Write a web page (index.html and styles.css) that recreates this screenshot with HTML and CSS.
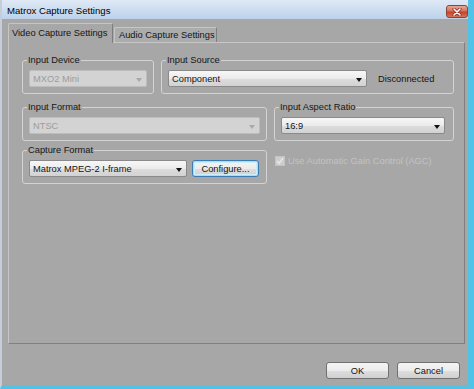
FILE: index.html
```html
<!DOCTYPE html>
<html lang="en">
<head>
    <meta charset="UTF-8">
    <title>Matrox Capture Settings</title>
    <link rel="stylesheet" href="styles.css">
</head>
<body>
    <div class="window">
        <div class="titlebar">
            <span class="title">Matrox Capture Settings</span>
            <span class="close-btn">
                <svg width="10" height="8" viewBox="0 0 10 8">
                    <path d="M2 1 L8 7 M8 1 L2 7" stroke="#7a2a1e" stroke-width="3" stroke-linecap="round"/>
                    <path d="M2 1 L8 7 M8 1 L2 7" stroke="#ffffff" stroke-width="1.6" stroke-linecap="round"/>
                </svg>
            </span>
        </div>

        <div class="client">
            <div class="tabs">
                <div class="tab active">Video Capture Settings</div>
                <div class="tab">Audio Capture Settings</div>
            </div>

            <div class="tab-page">
                <!-- Linha 1: dispositivo e fonte -->
                <div class="row">
                    <fieldset class="group device">
                        <legend>Input Device</legend>
                        <div class="combo disabled"><span>MXO2 Mini</span><i class="arrow"></i></div>
                    </fieldset>
                    <fieldset class="group source">
                        <legend>Input Source</legend>
                        <div class="inline">
                            <div class="combo source-combo"><span>Component</span><i class="arrow"></i></div>
                            <span class="status">Disconnected</span>
                        </div>
                    </fieldset>
                </div>

                <!-- Linha 2: formato e proporção -->
                <div class="row row-format">
                    <fieldset class="group wide">
                        <legend>Input Format</legend>
                        <div class="combo disabled"><span>NTSC</span><i class="arrow"></i></div>
                    </fieldset>
                    <fieldset class="group aspect">
                        <legend>Input Aspect Ratio</legend>
                        <div class="combo"><span>16:9</span><i class="arrow"></i></div>
                    </fieldset>
                </div>

                <!-- Linha 3: formato de captura e AGC -->
                <div class="row row-capture">
                    <fieldset class="group wide">
                        <legend>Capture Format</legend>
                        <div class="inline">
                            <div class="combo capture-combo"><span>Matrox MPEG-2 I-frame</span><i class="arrow"></i></div>
                            <button class="btn focused configure">Configure...</button>
                        </div>
                    </fieldset>
                    <div class="agc">
                        <span class="check">
                            <svg width="8" height="8" viewBox="0 0 8 8">
                                <path d="M1 4 L3 6.5 L7 1" fill="none" stroke="#e6e6e6" stroke-width="1.5"/>
                            </svg>
                        </span>
                        <span>Use Automatic Gain Control (AGC)</span>
                    </div>
                </div>
            </div>

            <div class="footer">
                <button class="btn">OK</button>
                <button class="btn">Cancel</button>
            </div>
        </div>
    </div>
</body>
</html>
```

FILE: styles.css
```css
/* Janela estilo Windows 7 */
* {
    box-sizing: border-box;
}

body {
    margin: 0;
    font-family: "Liberation Sans", Arial, sans-serif;
    font-size: 9.3px;
    color: #151515;
}

.window {
    width: 474px;
    height: 389px;
    background-color: #a7a7a7;
    border-left: 2px solid #c3ceda;
    border-right: 6px solid #52c3e6;
    border-bottom: 4px solid #52c3e6;
    display: flex;
    flex-direction: column;
}

/* Barra de título */
.titlebar {
    height: 19px;
    background: linear-gradient(#dfe9f5, #bcd2ea);
    display: flex;
    justify-content: space-between;
    align-items: flex-start;
}

.title {
    padding: 5px 0 0 5px;
    line-height: 11px;
    font-size: 9.6px;
    color: #000;
}

.close-btn {
    width: 22px;
    height: 13px;
    margin-top: 5px;
    border: 1px solid #8c4337;
    border-radius: 3px;
    background: linear-gradient(#eba697, #d7705a 45%, #c4412a 55%, #d8735c);
    display: flex;
    align-items: center;
    justify-content: center;
}

/* Abas */
.tabs {
    display: flex;
    align-items: flex-end;
    height: 24px;
    padding-left: 6px;
    margin-bottom: -1px;
    position: relative;
    z-index: 1;
}

.tab {
    height: 15px;
    width: 103px;
    margin-bottom: 1px;
    padding-left: 4px;
    line-height: 14px;
    background-color: #acacac;
    border: 1px solid;
    border-bottom: none;
    border-color: #c6c6c6 #7e7e7e #7e7e7e #c6c6c6;
    border-radius: 2px 2px 0 0;
    white-space: nowrap;
}

.tab.active {
    height: 20px;
    width: 105px;
    margin-bottom: 0;
    margin-right: 1px;
    padding-left: 3px;
    line-height: 19px;
    background-color: #a7a7a7;
}

/* Página da aba */
.tab-page {
    margin-left: 6px;
    width: 457px;
    height: 302px;
    border: 1px solid;
    border-color: #c6c6c6 #7e7e7e #808080 #c6c6c6;
    padding: 12px 0 0 13px;
}

.row {
    display: flex;
    gap: 7px;
}

.row-format {
    margin-top: 8px;
}

.row-capture {
    margin-top: 4px;
}

/* Grupos */
.group {
    margin: 0;
    min-width: 0;
    border: 1px solid #d3d3d3;
    border-radius: 3px;
    padding: 4px 6px 6px 6px;
}

.group legend {
    padding: 0 1px;
    margin-left: -2px;
    line-height: 11px;
    color: #161616;
}

.device {
    width: 132px;
}

.source {
    width: 293px;
}

.wide {
    width: 245px;
}

.aspect {
    width: 180px;
    padding-right: 8px;
}

.inline {
    display: flex;
    align-items: center;
}

/* Caixas de combinação */
.combo {
    height: 17px;
    border: 1px solid #8a8a8a;
    border-radius: 2px;
    background: linear-gradient(#f7f7f7, #ebebeb 50%, #dcdcdc 55%, #d2d2d2);
    display: flex;
    align-items: center;
    justify-content: space-between;
    padding: 0 4px 0 3px;
    white-space: nowrap;
}

.combo .arrow {
    width: 0;
    height: 0;
    margin-top: 2px;
    border-left: 3px solid transparent;
    border-right: 3px solid transparent;
    border-top: 4px solid #111;
}

.combo.disabled {
    background: #d3d3d3;
    border-color: #bdbdbd;
    color: #9c9c9c;
}

.combo.disabled .arrow {
    border-top-color: #a9a9a9;
}

.source-combo {
    width: 199px;
}

.status {
    margin-left: 11px;
}

.capture-combo {
    width: 158px;
}

/* Botões */
.btn {
    height: 17px;
    padding: 0;
    font: inherit;
    color: #111;
    border: 1px solid #717171;
    border-radius: 3px;
    background: linear-gradient(#f4f4f4, #ececec 50%, #dedede 52%, #d0d0d0);
}

.configure {
    width: 67px;
    margin-left: 5px;
}

.btn.focused {
    border-color: #3b7db3;
    box-shadow: inset 0 0 0 1px #a8def4, inset 0 0 0 2px #cdeefb;
}

/* Caixa de seleção desabilitada */
.agc {
    display: flex;
    align-items: center;
    gap: 3px;
    padding: 10px 0 0 1px;
    height: 21px;
    color: #c3c3c3;
    white-space: nowrap;
}

.check {
    width: 10px;
    height: 10px;
    border: 1px solid #c4c4c4;
    background-color: #cdcdcd;
    display: flex;
    align-items: center;
    justify-content: center;
}

/* Rodapé */
.footer {
    display: flex;
    justify-content: flex-end;
    gap: 8px;
    padding: 18px 8px 0 0;
}

.footer .btn {
    width: 63px;
}
```
